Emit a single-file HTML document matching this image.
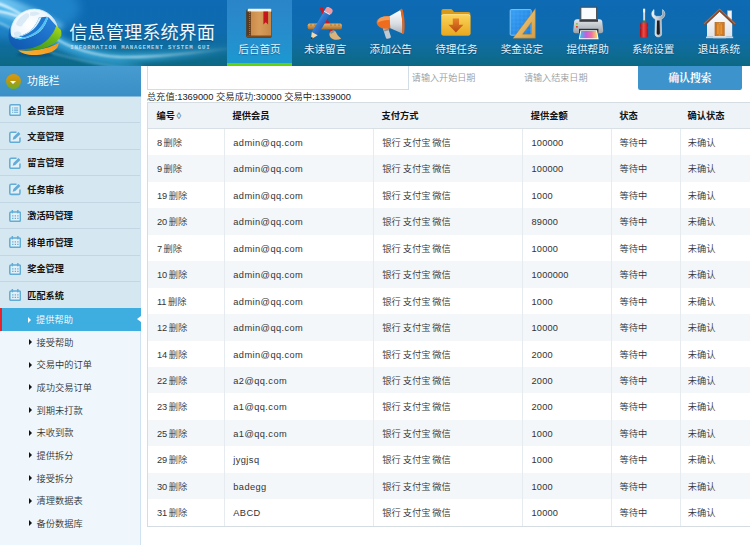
<!DOCTYPE html>
<html lang="zh-CN"><head><meta charset="utf-8"><title>信息管理系统界面</title>
<style>
*{margin:0;padding:0;box-sizing:border-box}
html,body{width:750px;height:545px;overflow:hidden;background:#fff}
body{font-family:"Liberation Sans","Noto Sans CJK SC",sans-serif;font-size:9.25px;font-weight:350;color:#333;position:relative}
#hd{position:absolute;z-index:5;left:0;top:0;width:750px;height:66px;overflow:hidden;
 background:linear-gradient(180deg,#0d6ab4 0%,#0e6bae 48%,#0f6c9a 74%,#0c6984 100%)}
#hd .sw{position:absolute;left:0;top:0}
#logo{position:absolute;left:6px;top:6px;width:60px;height:52px}
#ttl{font-weight:400;position:absolute;left:69.2px;top:19.8px;font-size:18.2px;line-height:26px;color:#f2f8fd;white-space:nowrap;letter-spacing:0.05px;text-shadow:0 1px 1px rgba(0,50,90,.5)}
#sub{position:absolute;left:70.2px;top:44.4px;font-size:5.7px;line-height:8px;color:rgba(205,230,248,.85);white-space:nowrap;letter-spacing:0.84px;font-family:"Liberation Mono","DejaVu Sans Mono",monospace;font-weight:bold}
.nv{position:absolute;top:0;height:66px;width:65.6px;text-align:center}
.nv.on{background:linear-gradient(180deg,#2b84c8 0%,#268ecd 55%,#1a9ad0 100%)}
.nv.on:after{content:"";position:absolute;left:0;right:0;bottom:0;height:3.2px;background:#62d20c}
.nv svg{position:absolute;left:12.8px;top:3px;width:40px;height:40px}
.nv span{font-weight:400;position:absolute;left:0;right:0;top:41px;font-size:10.6px;line-height:16px;color:#e6f2fb;white-space:nowrap;text-shadow:0 1px 1px rgba(0,40,80,.45)}
#sb{position:absolute;left:0;top:66px;width:141px;height:479px;background:#eff7fc;border-right:1.3px solid #cfe3f0}
#sbh{font-weight:400;position:absolute;left:0;top:0;width:141px;height:31px;background:linear-gradient(180deg,#469bd0,#3a8fc6);border-bottom:1px solid #86badb;color:#fff;font-size:10.8px;line-height:30.8px;padding-left:27.1px;z-index:2}
#sbh i{position:absolute;left:5.8px;top:8px;width:15.2px;height:15.2px;border-radius:50%;background:linear-gradient(180deg,#d69a12 0%,#c8960c 35%,#8da41c 75%,#6fae22 100%)}
#sbh i:after{content:"";position:absolute;left:4.4px;top:6.8px;border:3.2px solid transparent;border-top:3.6px solid #fff;border-bottom:0}
.m{position:absolute;left:0;width:139.8px;height:26.53px;background:#d5e7f1;border-bottom:1px solid #c2d7e3;font-weight:bold;color:#111;font-size:9.15px;line-height:27.7px;padding-left:27.3px;white-space:nowrap}
.mi{position:absolute;left:8.9px;top:7.9px;width:12.2px;height:12.2px}
.s{position:absolute;left:0;width:139.8px;height:22.62px;line-height:25px;padding-left:36.4px;color:#333;white-space:nowrap}
.s:before{content:"";position:absolute;left:28.5px;top:8.4px;border:3.1px solid transparent;border-left:3.7px solid #111;border-right:0}
.s.on{background:#3eaee0;color:#fff;border-left:2.4px solid #e5232b;padding-left:34px;width:140.6px}
.s.on:before{left:26.2px;border-left-color:#fff}
.s.on:after{content:"";position:absolute;right:0;top:8.1px;border:3.7px solid transparent;border-right:4px solid #fff;border-left:0}
#inp{position:absolute;left:147.3px;top:60px;width:261.6px;height:29.6px;border:1px solid #d2dde5;background:#fff}
.ph{position:absolute;top:71px;line-height:15px;font-size:9.1px;color:#9a9a9a;white-space:nowrap}
#btn{position:absolute;left:638.2px;top:60px;width:103.6px;height:29.7px;border-radius:2.2px;background:#3d94cc;color:#fff;font-weight:bold;font-size:10.9px;line-height:16px;text-align:center;padding-top:9.6px;font-family:"Liberation Serif","Noto Serif CJK SC",serif}
#st{position:absolute;left:146.8px;top:90px;line-height:14px;font-size:9.3px;color:#222;white-space:nowrap}
#tb{position:absolute;left:147.3px;top:101.8px;width:610px;height:425.1px;border:1px solid #d5dde3;border-right:0;background:#fff}
.r{position:absolute;left:0;width:610px;height:26.47px}
.r.h{background:#eef3f7;font-weight:bold;color:#111;border-bottom:1px solid #d8e0e6}
.r.e{background:#f3f7fa}
.r b,.r span{position:absolute;top:0;height:100%;line-height:28.2px;white-space:nowrap;font-weight:inherit;padding-left:8.6px;border-left:1px solid #e6ebef}
.r .c0{left:0;border-left:0;padding-left:8.6px;word-spacing:-1px}
.r .c1{left:75.4px;letter-spacing:.42px}.r .c2{left:224.4px;word-spacing:-.7px}.r .c3{left:373.7px;letter-spacing:.15px}.r .c4{left:463px}.r .c5{left:531.3px}
.r.h b{letter-spacing:0;border-left:0;padding-left:8.8px;line-height:26.4px}.r .c4,.r .c5{padding-left:7.2px}.r.h .c0{padding-left:8.2px}.r.h .c4,.r.h .c5{padding-left:8px}
.r.h .so{font-weight:bold;font-style:normal;color:#7590a6;font-size:9.5px;margin-left:1.5px}
</style></head><body>

<div id="hd">
<svg class="sw" width="750" height="66" viewBox="0 0 750 66">
<defs>
<filter id="bl1" x="-20%" y="-80%" width="140%" height="260%"><feGaussianBlur stdDeviation="2.4"/></filter>
<filter id="bl2" x="-20%" y="-80%" width="140%" height="260%"><feGaussianBlur stdDeviation="0.9"/></filter>
<filter id="bl3" x="-20%" y="-80%" width="140%" height="260%"><feGaussianBlur stdDeviation="5"/></filter>
<linearGradient id="fade" x1="0" y1="0" x2="240" y2="0" gradientUnits="userSpaceOnUse"><stop offset="0" stop-color="#fff" stop-opacity="1"/><stop offset=".6" stop-color="#fff" stop-opacity=".8"/><stop offset="1" stop-color="#fff" stop-opacity="0"/></linearGradient>
<mask id="mk"><rect x="0" y="0" width="260" height="66" fill="url(#fade)"/></mask>
<radialGradient id="gl" cx="40%" cy="32%" r="70%"><stop offset="0" stop-color="#ffffff"/><stop offset=".6" stop-color="#eaf4fb"/><stop offset="1" stop-color="#9fcbe9"/></radialGradient>
<linearGradient id="lb" x1="1" y1="0" x2="0" y2="1"><stop offset="0" stop-color="#2a86dc"/><stop offset=".6" stop-color="#1767c0"/><stop offset="1" stop-color="#0f56ac"/></linearGradient>
<linearGradient id="lg" x1="1" y1="0" x2="0" y2="1"><stop offset="0" stop-color="#b4dc18"/><stop offset=".35" stop-color="#6cb81c"/><stop offset="1" stop-color="#2f8a1c"/></linearGradient>
<linearGradient id="lo" x1="1" y1="0" x2="0" y2="1"><stop offset="0" stop-color="#f4921a"/><stop offset="1" stop-color="#f8b030"/></linearGradient>
</defs>
<ellipse cx="10" cy="8" rx="70" ry="30" fill="#2f98dc" opacity=".55" filter="url(#bl3)"/><ellipse cx="2" cy="9" rx="24" ry="11" fill="#58baf0" opacity=".85" filter="url(#bl3)" transform="rotate(24 2 9)"/>
<g mask="url(#mk)">
<g filter="url(#bl1)" fill="none" stroke-linecap="round">
<path d="M-5 6 C 20 12, 40 27, 55 38 C 70 48, 95 56, 120 57 C 150 57.500, 190 54, 240 47" stroke="#48baee" stroke-width="9" opacity=".75"/>
<path d="M-5 18 C 25 26, 50 42, 80 54 C 100 62, 120 66, 140 70" stroke="#3aa8e0" stroke-width="9" opacity=".6"/>
<path d="M-5 -2 C 20 4, 40 14, 60 26" stroke="#8fd8f8" stroke-width="6" opacity=".6"/>
</g>
<g filter="url(#bl2)" fill="none" stroke-linecap="round">
<path d="M-3 4 C 20 10, 40 26, 55 38 C 70 48, 95 56, 120 57 C 150 57.500, 190 54, 240 47" stroke="#d8f3fd" stroke-width="1.800" opacity=".9"/>
<path d="M-3 11 C 8 12.500, 14 15, 22 18" stroke="#f2fbff" stroke-width="2.600" opacity=".9"/><path d="M-3 2.500 C 8 6, 15 10.500, 22 15" stroke="#eaf8ff" stroke-width="2" opacity=".85"/><path d="M-3 22 C 4 24, 8 26.500, 12 29" stroke="#bfe6fa" stroke-width="1.400" opacity=".7"/>
<path d="M-3 14 C 15 18, 30 26, 45 36" stroke="#c8ecfb" stroke-width="1.200" opacity=".6"/>
<path d="M48 52 C 70 58, 95 64, 125 68" stroke="#a8e0f8" stroke-width="1.2" opacity=".55"/>
</g>
</g>
<!-- logo -->
<g>
<ellipse cx="35" cy="54.600" rx="18" ry="2.400" fill="#083c68" opacity=".5" filter="url(#bl2)"/>
<clipPath id="gc"><path d="M0 0H80V30L60 32C56 44 40 50 20 49L9 37L0 37Z"/></clipPath><circle cx="34.400" cy="32.800" r="23.700" fill="url(#gl)" stroke="#d6eaf7" stroke-width=".7" clip-path="url(#gc)"/>
<path d="M16 24c2-5 6-9 11-11c3 1 3 4 0 6c-1 3-4 4-5 7c-2 1-5 0-6-2zM14 33c2-2 5-2 7 0c1 3-1 6-4 6c-2-1-3-4-3-6zM30 12.500c3-1 7-1 10 1c-3 2-7 3-10 2z" fill="#d3e7f5" opacity=".85"/>
<path d="M59.600 41.600 L 57.300 47.800 C 54 51, 50 53, 46 53.600 C 42 54.800, 38 55.100, 33.900 55.100 C 27 55, 21 53, 18.200 50.200 C 34 52, 50 48, 59.300 42.400Z" fill="url(#lo)"/>
<path d="M56.300 25.800 L 60.700 29.800 C 61.600 32, 61.600 34, 61.200 35.800 C 59 39, 56 42.400, 52 44.800 C 47 47.800, 41 49.400, 36.300 49.800 C 29 50.600, 22 50.200, 17 49 C 32 47, 48 40, 56.300 26.400Z" fill="url(#lg)"/>
<path d="M48.400 17 L 56.300 26 C 54.500 31, 52 35, 48.400 38.700 C 45 42, 41 45, 36.300 46.600 C 32 48.400, 28 49, 24.200 49 C 21 49.200, 18 49, 15.700 48.400 C 11.500 46, 8.600 41, 8.500 36.300 C 8.600 32, 9 29, 10.300 26 C 10 30, 10.400 33.500, 11.500 36.300 C 15 39.500, 20 39.600, 24.200 38.700 C 30 37.500, 36 34.500, 40 31.500 C 44 27.500, 46.600 22, 48.400 17Z" fill="url(#lb)"/>
<path d="M48.400 17 L 46.600 16.800 C 44.500 22, 41.500 26.500, 38 30 C 34 33.500, 29 36.300, 24 37.400 C 20 38.300, 15.500 38.200, 11.900 36.600 C 15 39.600, 20 39.600, 24.200 38.700 C 30 37.500, 36 34.500, 40 31.500 C 44 27.500, 46.600 22, 48.400 17Z" fill="#4dc2f2"/>
<path d="M46.600 16.800 L 39 17.600 C 37.500 22, 35 26, 31.500 29.500 C 28 32.500, 24 35, 19 36.200 C 21 37.200, 23 37.500, 24 37.400 C 29 36.300, 34 33.500, 38 30 C 41.500 26.500, 44.500 22, 46.600 16.800Z" fill="#1d78d0"/>
<path d="M39 17.600 L 41.500 17.300 C 39.500 22, 37 26, 33.500 29.300 C 30 32.300, 26 34.600, 21.500 36.300 L 19.500 36.100 C 24 34.800, 28 32.500, 31.500 29.500 C 35 26, 37.500 22, 39 17.600Z" fill="#d8f0fb"/>
</g>
</svg>

<div id="ttl">信息管理系统界面</div><div id="sub">INFORMATION MANAGEMENT SYSTEM GUI</div>
<div class="nv on" style="left:226.70px"><svg viewBox="0 0 40 40">
<defs><linearGradient id="bk" x1="0" y1="0" x2="1" y2="0"><stop offset="0" stop-color="#c28242"/><stop offset=".5" stop-color="#d89c5a"/><stop offset="1" stop-color="#c58848"/></linearGradient></defs>
<rect x="7.400" y="6" width="25.400" height="28.800" rx="1.800" fill="#4e2e14"/>
<rect x="8.600" y="5.700" width="23.800" height="3.600" rx="1" fill="#f6f3ec"/>
<rect x="8" y="8.600" width="24.300" height="25.400" rx="1.200" fill="url(#bk)"/>
<rect x="7.600" y="8.600" width="4.300" height="25.600" fill="#5e3a1a"/>
<path d="M10.700 9v25" stroke="#c09868" stroke-width=".7" stroke-dasharray="1 1"/>
<rect x="7.600" y="32.600" width="25" height="1.800" rx=".8" fill="#7a4c22"/>
<path d="M24.400 8.600h4.700v13l-2.350-2.300l-2.350 2.300z" fill="#c4161c"/>
</svg><span>后台首页</span></div>
<div class="nv" style="left:292.32px"><svg viewBox="0 0 40 40">
<defs><linearGradient id="rl" x1="0" y1="0" x2="0" y2="1"><stop offset="0" stop-color="#e6b672"/><stop offset=".5" stop-color="#c8924e"/><stop offset="1" stop-color="#a06a2a"/></linearGradient>
<linearGradient id="pn" x1="0" y1="0" x2="1" y2="1"><stop offset="0" stop-color="#7cc0f6"/><stop offset=".45" stop-color="#2c78d0"/><stop offset="1" stop-color="#143f8c"/></linearGradient></defs>
<path d="M14.800 5.300l2.700-1.200L27.800 28l-2.900 1.400z" fill="#cc1a22"/>
<path d="M24.800 29.600c1.200-2.400 4.400-3 6-.8c1.200 2.600 2.800 5 5.400 6.800c-3.400 2-8.200 1.600-10.600-1.200c-1.200-1.400-1.500-3.200-.8-4.800z" fill="#dab27c"/>
<path d="M25 29.200c1.400-1.400 3.400-1.600 4.800-.4l-4 2.200z" fill="#8a8f96"/>
<rect x="2.700" y="20.400" width="34.200" height="6.200" rx="1.800" fill="url(#rl)"/>
<path d="M6 20.600v2.400M10 20.600v2.400M14 20.600v2.400M26 20.600v2.400M30 20.600v2.400M34 20.600v2.400" stroke="#8a5a20" stroke-width=".6"/>
<path d="M18.800 8.700L24.600 12.100L12.700 32.300L6.800 28.900z" fill="url(#pn)"/>
<path d="M19.300 7.800l1.400-2.400c.8-1.400 2.400-1.800 3.800-1l1.800 1c1.400.8 1.800 2.400 1 3.800l-1.400 2.400z" fill="#f29aa4"/>
<path d="M18.800 8.700L24.600 12.100l.6-1L19.400 7.700z" fill="#e4eaf0"/>
<path d="M6.800 28.900l5.900 3.400l-6.800 4.300z" fill="#f2d8aa"/>
<path d="M5.900 36.600l.3-2.700l2.100 1.200z" fill="#2a2a2a"/>
</svg><span>未读留言</span></div>
<div class="nv" style="left:357.94px"><svg viewBox="0 0 40 40">
<defs><linearGradient id="mg" x1="0" y1="0" x2="0" y2="1"><stop offset="0" stop-color="#ffffff"/><stop offset=".6" stop-color="#d8dde2"/><stop offset="1" stop-color="#a8b0b8"/></linearGradient></defs>
<path d="M11.600 24.400l4.800-1.400l3.400 10.200c.3 1-.2 1.700-1.200 2l-1.800.5c-1 .3-1.700-.2-2-1.200z" fill="#c2c8ce"/>
<path d="M12.800 26.800l4.400-1.400l.6 1.800l-4.400 1.400z" fill="#8a9299"/>
<path d="M18 13.600L29.500 7c1.500 5.600 2.600 15.600 1.800 23.400L18.800 25z" fill="url(#mg)"/>
<path d="M29.200 6.200c1-.9 2.100-.6 2.500.8c1.800 6 2.500 16.200 1.500 22.600c-.2 1.400-1.200 1.900-2.300 1.100c1-7.600.2-17.600-1.700-24.500z" fill="#e8641a"/>
<path d="M9.800 14.600c2.600-1.200 5.600-1.600 8.600-1.200l1 11.800c-2.800.8-5.800.8-8.600 0c-3.600-1.200-5.400-3.800-5.200-6.200c.2-2 1.800-3.400 4.200-4.400z" fill="#ee6c1e"/>
<path d="M9.800 14.600c2.600-1.200 5.600-1.600 8.600-1.200l.3 3.600c-3.800-.4-8 .4-12.200 2.800c.4-2.400 1.400-4.200 3.300-5.200z" fill="#f79a52"/>
</svg><span>添加公告</span></div>
<div class="nv" style="left:423.56px"><svg viewBox="0 0 40 40">
<defs><linearGradient id="fd" x1="0" y1="0" x2="0" y2="1"><stop offset="0" stop-color="#fbd45a"/><stop offset="1" stop-color="#e8a820"/></linearGradient>
<linearGradient id="ar" x1="0" y1="0" x2="0" y2="1"><stop offset="0" stop-color="#e8842a"/><stop offset="1" stop-color="#b8480e"/></linearGradient></defs>
<path d="M5.400 8c0-1.200.8-2 2-2h7c1 0 1.600.4 2.200 1.200l1.400 1.800h14.400c1.200 0 2 .8 2 2v19.400c0 1.200-.8 2-2 2H7.400c-1.200 0-2-.8-2-2z" fill="#d89a18"/>
<path d="M5.400 13.200c0-1.200.8-2 2-2h25c1.200 0 2 .8 2 2v17.200c0 1.200-.8 2-2 2h-25c-1.200 0-2-.8-2-2z" fill="url(#fd)"/>
<path d="M5.900 13c0-.8.600-1.300 1.400-1.300h25c.8 0 1.400.5 1.400 1.300" fill="none" stroke="#fde89a" stroke-width=".8"/>
<path d="M16.800 15.400h6.200v6.400h4.400l-7.500 7.600l-7.500-7.600h4.400z" fill="url(#ar)"/>
</svg><span>待理任务</span></div>
<div class="nv" style="left:489.18px"><svg viewBox="0 0 40 40">
<defs><linearGradient id="bp" x1="0" y1="0" x2="1" y2="1"><stop offset="0" stop-color="#3aa0f4"/><stop offset="1" stop-color="#1c7ede"/></linearGradient>
<linearGradient id="tr" x1="0" y1="0" x2="1" y2="1"><stop offset="0" stop-color="#f6d488"/><stop offset="1" stop-color="#d49c44"/></linearGradient></defs>
<rect x="8.200" y="6.600" width="21" height="25.600" rx="1" fill="url(#bp)" stroke="#7cc4fa" stroke-width="1"/>
<path d="M12 7v25M16 7v25M20 7v25M24 7v25M9 11h20M9 15h20M9 19h20M9 23h20M9 27h20" stroke="#5ab4f8" stroke-width=".35" opacity=".7"/>
<path d="M33.400 5.600V35.200H11zM29.400 19.400V31.200H20.600z" fill="url(#tr)" fill-rule="evenodd" stroke="#a87428" stroke-width=".5"/>
</svg><span>奖金设定</span></div>
<div class="nv" style="left:554.80px"><svg viewBox="0 0 40 40">
<defs><linearGradient id="pr" x1="0" y1="0" x2="0" y2="1"><stop offset="0" stop-color="#e4e7ea"/><stop offset="1" stop-color="#9aa2aa"/></linearGradient>
<linearGradient id="rb" x1="0" y1="0" x2="1" y2="0"><stop offset="0" stop-color="#30c8e8"/><stop offset=".35" stop-color="#c060e0"/><stop offset=".65" stop-color="#f070a0"/><stop offset="1" stop-color="#f8e060"/></linearGradient></defs>
<rect x="12.800" y="4.200" width="15.800" height="14" fill="#fafbfc" stroke="#4a4e52" stroke-width="1.1"/>
<path d="M9 16.200h22.400c1.400 0 2.400.8 2.800 2l1 9.200c.2 1.600-.8 2.800-2.400 2.800H7.600c-1.600 0-2.600-1.200-2.400-2.800l1-9.200c.4-1.200 1.400-2 2.800-2z" fill="url(#pr)"/>
<path d="M11.400 16.200h18.600v2.600H11.400z" fill="#3a3e42"/>
<rect x="8" y="20" width="1.800" height="1.600" fill="#6cd820"/><rect x="8" y="23" width="1.800" height="1.600" fill="#e83a2a"/>
<path d="M11 25.800h19.400v4.400H11z" fill="#2c2f33"/>
<path d="M12.400 27.200h16.600l1.600 9H10.800z" fill="#fff"/>
<path d="M13.200 28h15l1.300 7.200h-17.600z" fill="url(#rb)"/>
</svg><span>提供帮助</span></div>
<div class="nv" style="left:620.42px"><svg viewBox="0 0 40 40">
<defs><linearGradient id="sd" x1="0" y1="0" x2="1" y2="0"><stop offset="0" stop-color="#a80c10"/><stop offset=".45" stop-color="#f04a48"/><stop offset="1" stop-color="#b01014"/></linearGradient>
<linearGradient id="wr" x1="0" y1="0" x2="1" y2="0"><stop offset="0" stop-color="#f4f6f8"/><stop offset=".5" stop-color="#c4cad0"/><stop offset="1" stop-color="#8c949c"/></linearGradient></defs>
<rect x="10.200" y="5.800" width="1.900" height="13" fill="#d8dce0"/>
<rect x="10.200" y="5.800" width="1.900" height="3.600" fill="#f4f4f4"/>
<rect x="9.700" y="17.400" width="2.900" height="2.400" fill="#2a8a3a"/>
<path d="M7.200 20.600c0-.8.600-1.200 1.400-1.200h5.100c.8 0 1.400.4 1.400 1.200v3l-.8 1.200l.8 1.200v6.800c0 1.200-.8 1.800-2 1.800H9c-1.200 0-2-.6-2-1.800v-6.800l.8-1.200l-.8-1.200z" fill="url(#sd)"/>
<path d="M21 6.600c-1.600 1.200-2.400 3-2.200 5c.2 2.200 1.600 3.800 3.600 4.600l-.4 14.600c0 1.800 1.200 3 3 3h.6c1.800 0 3-1.200 3-3l-.4-14.600c2-.8 3.400-2.400 3.600-4.600c.2-2-.6-3.800-2.200-5v5.200l-2.200 1.600h-4.200L21 11.800z" fill="url(#wr)" stroke="#e8ecf0" stroke-width=".6"/>
<path d="M24 17.400h2.600l.3 12.800c0 .9-.7 1.500-1.600 1.500s-1.600-.6-1.600-1.500z" fill="#1c1e22"/>
</svg><span>系统设置</span></div>
<div class="nv" style="left:686.04px"><svg viewBox="0 0 40 40">
<defs><linearGradient id="hw" x1="0" y1="0" x2="0" y2="1"><stop offset="0" stop-color="#ffffff"/><stop offset="1" stop-color="#dfe2e6"/></linearGradient>
<linearGradient id="dr" x1="0" y1="0" x2="1" y2="0"><stop offset="0" stop-color="#d87818"/><stop offset=".5" stop-color="#f4a848"/><stop offset="1" stop-color="#d87818"/></linearGradient></defs>
<rect x="28.600" y="7.800" width="4.200" height="9" fill="#f4f4f4" stroke="#c8c8c8" stroke-width=".4"/>
<path d="M20.600 8.600L33.200 20.400V33.800H8V20.400z" fill="url(#hw)"/>
<path d="M4.600 20.600L20.600 5.400L36.600 20.600L35 22.400L20.600 8.800L6.200 22.400z" fill="#8a4a2a"/>
<path d="M4.600 20.600L20.600 5.400L36.600 20.600l-.6.700L20.600 6.600L5.200 21.300z" fill="#b8704a"/>
<rect x="16" y="19.400" width="9.200" height="13.600" fill="url(#dr)" stroke="#a85a10" stroke-width=".6"/>
<path d="M17.400 20.800h2.700v10.800h-2.700zM21.100 20.800h2.700v10.800h-2.700z" fill="none" stroke="#b86414" stroke-width=".5"/>
<rect x="14" y="33" width="13.200" height="2.200" fill="#e8e8e8"/>
<rect x="7" y="33.600" width="27.200" height="1.600" fill="#cfd2d6"/>
</svg><span>退出系统</span></div>
</div>

<div id="sb"><div id="sbh"><i></i>功能栏</div>
<div class="m" style="top:30px;height:27px;line-height:30.0px"><svg class="mi" style="top:8.1px" viewBox="0 0 12 12"><rect x="0.8" y="0.8" width="10.4" height="10.4" rx="1.3" fill="#e3f0f7" stroke="#62acd6" stroke-width="1.5"/><path d="M3 3.9h1.200M5 3.900h4M3 6h1.200M5 6h4M3 8.100h1.200M5 8.100h4" stroke="#62acd6" stroke-width="1.1"/></svg>会员管理</div>
<div class="m" style="top:57px;height:27px;line-height:28.9px"><svg class="mi" style="top:7.5px" viewBox="0 0 12 12"><path d="M7.400 1.200H2.200Q0.800 1.200 0.800 2.600V9.800Q0.800 11.200 2.200 11.200H9.400Q10.800 11.200 10.800 9.800V6.400" fill="#e3f0f7" stroke="#62acd6" stroke-width="1.5"/><path d="M3.600 8.600L4.300 6L9.300 1L11.200 2.900L6.200 7.900Z" fill="#62acd6"/></svg>文章管理</div>
<div class="m" style="top:84px;height:26px;line-height:27.7px"><svg class="mi" style="top:7.0px" viewBox="0 0 12 12"><path d="M7.400 1.200H2.200Q0.800 1.200 0.800 2.600V9.800Q0.800 11.200 2.200 11.200H9.400Q10.800 11.200 10.800 9.800V6.400" fill="#e3f0f7" stroke="#62acd6" stroke-width="1.5"/><path d="M3.600 8.600L4.300 6L9.300 1L11.200 2.900L6.200 7.900Z" fill="#62acd6"/></svg>留言管理</div>
<div class="m" style="top:110px;height:27px;line-height:28.6px"><svg class="mi" style="top:7.4px" viewBox="0 0 12 12"><path d="M7.400 1.200H2.200Q0.800 1.200 0.800 2.600V9.800Q0.800 11.200 2.200 11.200H9.400Q10.800 11.200 10.800 9.800V6.400" fill="#e3f0f7" stroke="#62acd6" stroke-width="1.5"/><path d="M3.600 8.600L4.300 6L9.300 1L11.200 2.900L6.200 7.900Z" fill="#62acd6"/></svg>任务审核</div>
<div class="m" style="top:137px;height:26px;line-height:27.4px"><svg class="mi" style="top:6.8px" viewBox="0 0 12 12"><rect x="0.8" y="1.900" width="10.400" height="9.300" rx="1.300" fill="#e3f0f7" stroke="#62acd6" stroke-width="1.5"/><path d="M3.300 0.500v2.200M8.700 0.500v2.200" stroke="#62acd6" stroke-width="1.500" stroke-linecap="round"/><path d="M3.100 5.800h6.400M3.100 8.200h6.400" stroke="#62acd6" stroke-width="1.100" stroke-dasharray="1.3 1.2"/></svg>激活码管理</div>
<div class="m" style="top:163px;height:27px;line-height:28.3px"><svg class="mi" style="top:7.2px" viewBox="0 0 12 12"><rect x="0.8" y="1.900" width="10.400" height="9.300" rx="1.300" fill="#e3f0f7" stroke="#62acd6" stroke-width="1.5"/><path d="M3.300 0.500v2.200M8.700 0.500v2.200" stroke="#62acd6" stroke-width="1.500" stroke-linecap="round"/><path d="M3.100 5.800h6.400M3.100 8.200h6.400" stroke="#62acd6" stroke-width="1.100" stroke-dasharray="1.3 1.2"/></svg>排单币管理</div>
<div class="m" style="top:190px;height:26px;line-height:27.2px"><svg class="mi" style="top:6.7px" viewBox="0 0 12 12"><rect x="0.8" y="1.900" width="10.400" height="9.300" rx="1.300" fill="#e3f0f7" stroke="#62acd6" stroke-width="1.5"/><path d="M3.300 0.500v2.200M8.700 0.500v2.200" stroke="#62acd6" stroke-width="1.500" stroke-linecap="round"/><path d="M3.100 5.800h6.400M3.100 8.200h6.400" stroke="#62acd6" stroke-width="1.100" stroke-dasharray="1.3 1.2"/></svg>奖金管理</div>
<div class="m" style="top:216px;height:27px;line-height:28.0px"><svg class="mi" style="top:7.1px" viewBox="0 0 12 12"><rect x="0.8" y="1.900" width="10.400" height="9.300" rx="1.300" fill="#e3f0f7" stroke="#62acd6" stroke-width="1.5"/><path d="M3.300 0.500v2.200M8.700 0.500v2.200" stroke="#62acd6" stroke-width="1.500" stroke-linecap="round"/><path d="M3.100 5.800h6.400M3.100 8.200h6.400" stroke="#62acd6" stroke-width="1.100" stroke-dasharray="1.3 1.2"/></svg>匹配系统</div>
<div class="s on" style="top:242.20px">提供帮助</div>
<div class="s" style="top:264.82px">接受帮助</div>
<div class="s" style="top:287.44px">交易中的订单</div>
<div class="s" style="top:310.06px">成功交易订单</div>
<div class="s" style="top:332.68px">到期未打款</div>
<div class="s" style="top:355.30px">未收到款</div>
<div class="s" style="top:377.92px">提供拆分</div>
<div class="s" style="top:400.54px">接受拆分</div>
<div class="s" style="top:423.16px">清理数据表</div>
<div class="s" style="top:445.78px">备份数据库</div>
</div>

<div id="inp"></div><div class="ph" style="left:411.8px">请输入开始日期</div><div class="ph" style="left:523.9px">请输入结束日期</div><div id="btn">确认搜索</div>
<div id="st">总充值:1369000 交易成功:30000 交易中:1339000</div>

<div id="tb">
<div class="r h" style="top:0"><b class="c0">编号<i class="so">◊</i></b><b class="c1">提供会员</b><b class="c2">支付方式</b><b class="c3">提供金额</b><b class="c4">状态</b><b class="c5">确认状态</b></div>
<div class="r" style="top:26.00px"><span class="c0">8 删除</span><span class="c1">admin@qq.com</span><span class="c2">银行 支付宝 微信</span><span class="c3">100000</span><span class="c4">等待中</span><span class="c5">未确认</span></div>
<div class="r e" style="top:52.47px"><span class="c0">9 删除</span><span class="c1">admin@qq.com</span><span class="c2">银行 支付宝 微信</span><span class="c3">100000</span><span class="c4">等待中</span><span class="c5">未确认</span></div>
<div class="r" style="top:78.94px"><span class="c0">19 删除</span><span class="c1">admin@qq.com</span><span class="c2">银行 支付宝 微信</span><span class="c3">1000</span><span class="c4">等待中</span><span class="c5">未确认</span></div>
<div class="r e" style="top:105.41px"><span class="c0">20 删除</span><span class="c1">admin@qq.com</span><span class="c2">银行 支付宝 微信</span><span class="c3">89000</span><span class="c4">等待中</span><span class="c5">未确认</span></div>
<div class="r" style="top:131.88px"><span class="c0">7 删除</span><span class="c1">admin@qq.com</span><span class="c2">银行 支付宝 微信</span><span class="c3">10000</span><span class="c4">等待中</span><span class="c5">未确认</span></div>
<div class="r e" style="top:158.35px"><span class="c0">10 删除</span><span class="c1">admin@qq.com</span><span class="c2">银行 支付宝 微信</span><span class="c3">1000000</span><span class="c4">等待中</span><span class="c5">未确认</span></div>
<div class="r" style="top:184.82px"><span class="c0">11 删除</span><span class="c1">admin@qq.com</span><span class="c2">银行 支付宝 微信</span><span class="c3">1000</span><span class="c4">等待中</span><span class="c5">未确认</span></div>
<div class="r e" style="top:211.29px"><span class="c0">12 删除</span><span class="c1">admin@qq.com</span><span class="c2">银行 支付宝 微信</span><span class="c3">10000</span><span class="c4">等待中</span><span class="c5">未确认</span></div>
<div class="r" style="top:237.76px"><span class="c0">14 删除</span><span class="c1">admin@qq.com</span><span class="c2">银行 支付宝 微信</span><span class="c3">2000</span><span class="c4">等待中</span><span class="c5">未确认</span></div>
<div class="r e" style="top:264.23px"><span class="c0">22 删除</span><span class="c1">a2@qq.com</span><span class="c2">银行 支付宝 微信</span><span class="c3">2000</span><span class="c4">等待中</span><span class="c5">未确认</span></div>
<div class="r" style="top:290.70px"><span class="c0">23 删除</span><span class="c1">a1@qq.com</span><span class="c2">银行 支付宝 微信</span><span class="c3">2000</span><span class="c4">等待中</span><span class="c5">未确认</span></div>
<div class="r e" style="top:317.17px"><span class="c0">25 删除</span><span class="c1">a1@qq.com</span><span class="c2">银行 支付宝 微信</span><span class="c3">1000</span><span class="c4">等待中</span><span class="c5">未确认</span></div>
<div class="r" style="top:343.64px"><span class="c0">29 删除</span><span class="c1">jygjsq</span><span class="c2">银行 支付宝 微信</span><span class="c3">1000</span><span class="c4">等待中</span><span class="c5">未确认</span></div>
<div class="r e" style="top:370.11px"><span class="c0">30 删除</span><span class="c1">badegg</span><span class="c2">银行 支付宝 微信</span><span class="c3">1000</span><span class="c4">等待中</span><span class="c5">未确认</span></div>
<div class="r" style="top:396.58px"><span class="c0">31 删除</span><span class="c1">ABCD</span><span class="c2">银行 支付宝 微信</span><span class="c3">10000</span><span class="c4">等待中</span><span class="c5">未确认</span></div>
</div>
</body></html>
